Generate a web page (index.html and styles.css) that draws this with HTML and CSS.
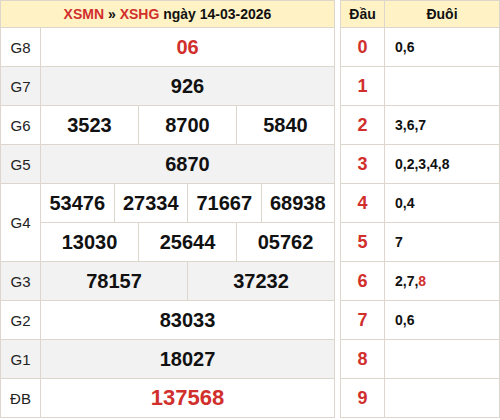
FILE: index.html
```html
<!DOCTYPE html>
<html lang="vi">
<head>
<meta charset="utf-8">
<link rel="stylesheet" href="styles.css">
</head>
<body>
<div class="wrap">
  <table class="kq">
    <colgroup>
      <col class="c-label">
      <col span="12">
    </colgroup>
    <thead>
      <tr class="head">
        <th colspan="13"><span class="red">XSMN</span> » <span class="red">XSHG</span> ngày 14-03-2026</th>
      </tr>
    </thead>
    <tbody>
      <tr><td class="lbl">G8</td><td colspan="12" class="num red">06</td></tr>
      <tr class="alt"><td class="lbl">G7</td><td colspan="12" class="num">926</td></tr>
      <tr><td class="lbl">G6</td><td colspan="4" class="num">3523</td><td colspan="4" class="num">8700</td><td colspan="4" class="num">5840</td></tr>
      <tr class="alt"><td class="lbl">G5</td><td colspan="12" class="num">6870</td></tr>
      <tr><td class="lbl" rowspan="2">G4</td><td colspan="3" class="num">53476</td><td colspan="3" class="num">27334</td><td colspan="3" class="num">71667</td><td colspan="3" class="num">68938</td></tr>
      <tr><td colspan="4" class="num">13030</td><td colspan="4" class="num">25644</td><td colspan="4" class="num">05762</td></tr>
      <tr class="alt"><td class="lbl">G3</td><td colspan="6" class="num">78157</td><td colspan="6" class="num">37232</td></tr>
      <tr><td class="lbl">G2</td><td colspan="12" class="num">83033</td></tr>
      <tr class="alt"><td class="lbl">G1</td><td colspan="12" class="num">18027</td></tr>
      <tr><td class="lbl">ĐB</td><td colspan="12" class="num db red">137568</td></tr>
    </tbody>
  </table>

  <table class="lt">
    <colgroup>
      <col class="c-dau">
      <col>
    </colgroup>
    <thead>
      <tr class="head"><th>Đầu</th><th>Đuôi</th></tr>
    </thead>
    <tbody>
      <tr><td class="dau">0</td><td class="duoi">0,6</td></tr>
      <tr><td class="dau">1</td><td class="duoi"></td></tr>
      <tr><td class="dau">2</td><td class="duoi">3,6,7</td></tr>
      <tr><td class="dau">3</td><td class="duoi">0,2,3,4,8</td></tr>
      <tr><td class="dau">4</td><td class="duoi">0,4</td></tr>
      <tr><td class="dau">5</td><td class="duoi">7</td></tr>
      <tr><td class="dau">6</td><td class="duoi">2,7,<span class="red">8</span></td></tr>
      <tr><td class="dau">7</td><td class="duoi">0,6</td></tr>
      <tr><td class="dau">8</td><td class="duoi"></td></tr>
      <tr><td class="dau">9</td><td class="duoi"></td></tr>
    </tbody>
  </table>
</div>
</body>
</html>
```

FILE: styles.css
```css
html, body {
  margin: 0;
  padding: 0;
  background: #fff;
}

body {
  font-family: "Liberation Sans", Arial, sans-serif;
  color: #111;
}

.wrap {
  display: flex;
  align-items: flex-start;
  gap: 5px;
}

table {
  border-collapse: collapse;
  table-layout: fixed;
}

th, td {
  border: 1px solid #ddd6cc;
  padding: 0;
  text-align: center;
  vertical-align: middle;
}

.kq {
  width: 335px;
}

.c-label {
  width: 40px;
}

.head th {
  background: #fff3c6;
  height: 26px;
  font-size: 14px;
  font-weight: bold;
  color: #111;
}

.red {
  color: #d12f2c;
}

.kq td {
  height: 38px;
}

.alt td {
  background: #f2f2f2;
}

.lbl {
  font-size: 15px;
  color: #222;
}

.num {
  font-size: 20px;
  font-weight: bold;
}

.num.db {
  font-size: 22px;
}

.lt {
  width: 160px;
}

.c-dau {
  width: 44px;
}

.lt td {
  height: 38px;
}

.dau {
  font-size: 18px;
  font-weight: bold;
  color: #d12f2c;
}

.duoi {
  text-align: left;
  padding-left: 10px;
  font-size: 14px;
  font-weight: bold;
}
```
